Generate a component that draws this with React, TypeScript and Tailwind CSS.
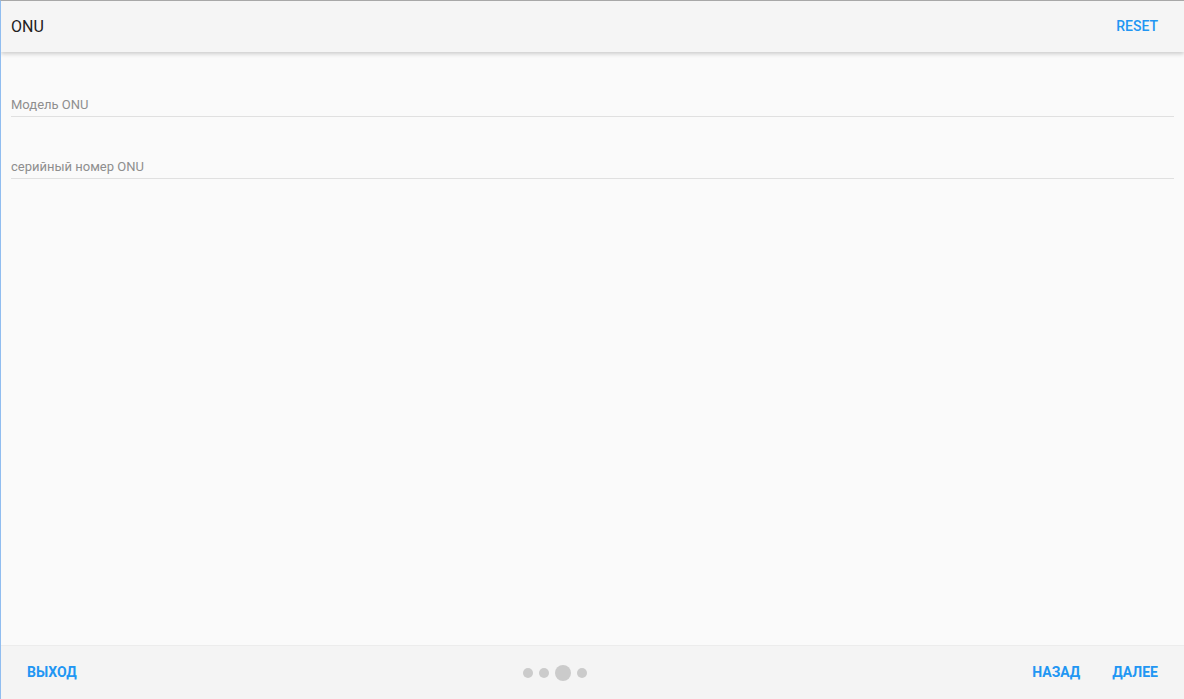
export default function App() {
  const fields = ["Модель ONU", "серийный номер ONU"]

  return (
    <div
      className="h-[699px] w-[1184px] flex flex-col bg-[#fafafa] border-l border-l-[#90bdf0] border-t border-t-[#a8a8a8] overflow-hidden"
      style={{ fontFamily: "Roboto, 'Liberation Sans', sans-serif" }}
    >
      <header className="h-[51px] shrink-0 flex items-center justify-between pl-[10px] pr-[26px] bg-[#f5f5f5] shadow-[0_2px_4px_rgba(0,0,0,0.18)] relative z-10">
        <span className="text-[16px] font-normal text-[#212121]">ONU</span>
        <button className="text-[14px] font-medium text-[#2196f3]">RESET</button>
      </header>

      <main className="flex-1 pl-[10px] pr-[10px] pt-[3px]">
        {fields.map((label) => (
          <div key={label} className="h-[62px] flex items-end">
            <div className="w-full border-b border-[#e0e0e0] pb-[2px] text-[13px] text-[#8e8e8e]">{label}</div>
          </div>
        ))}
      </main>

      <footer className="h-[54px] shrink-0 flex items-center justify-between bg-[#f4f4f4] border-t border-[#ececec] pl-[26px] pr-[26px]">
        <button className="text-[14px] font-bold text-[#2196f3]">ВЫХОД</button>
        <div className="flex items-center gap-[6px]">
          <span className="w-[10px] h-[10px] rounded-full bg-[#cbcbcb]" />
          <span className="w-[10px] h-[10px] rounded-full bg-[#cbcbcb]" />
          <span className="w-[16px] h-[16px] rounded-full bg-[#cbcbcb]" />
          <span className="w-[10px] h-[10px] rounded-full bg-[#cbcbcb]" />
        </div>
        <div className="flex items-center gap-[32px]">
          <button className="text-[14px] font-bold text-[#2196f3]">НАЗАД</button>
          <button className="text-[14px] font-bold text-[#2196f3]">ДАЛЕЕ</button>
        </div>
      </footer>
    </div>
  )
}
